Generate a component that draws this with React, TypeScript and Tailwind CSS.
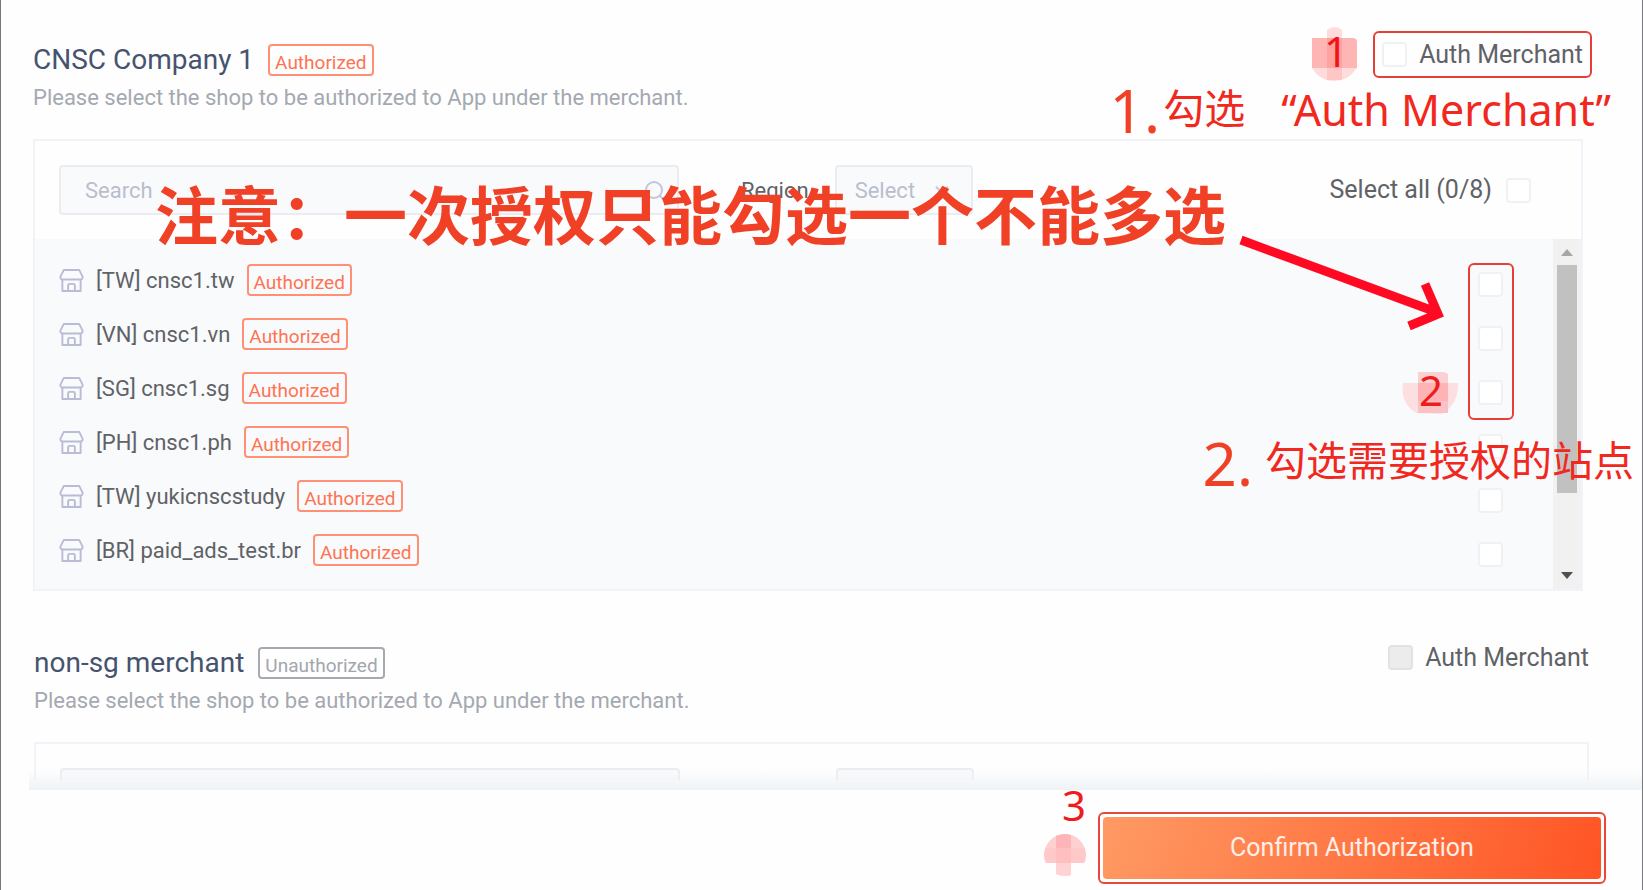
import type { ReactNode } from "react";
import { ChevronDown, Search } from "lucide-react";

const shops = [
  "[TW] cnsc1.tw",
  "[VN] cnsc1.vn",
  "[SG] cnsc1.sg",
  "[PH] cnsc1.ph",
  "[TW] yukicnscstudy",
  "[BR] paid_ads_test.br",
];

const note = "pointer-events-none absolute whitespace-nowrap leading-none font-['Noto_Sans','Noto_Sans_CJK_SC',sans-serif]";
const box = "size-[25px] shrink-0 appearance-none rounded-sm border-2 border-[#f0f1f4] bg-white checked:bg-[#ff5722] disabled:border-[#e2e2e2] disabled:bg-[#ececec]";
const field = "h-[50px] appearance-none rounded-sm border-2 border-[#eaecf0] bg-[#f9fafc] text-[#b9bece] outline-none";

function Badge({ off = false }: { off?: boolean }) {
  const color = off ? "border-[#a6a9b0] text-[#a3a6ad]" : "border-[#ff8f75] text-[#ff7352]";
  return (
    <span className={`flex h-8 items-center rounded-sm border-2 px-[5px] pt-1 text-[19px] leading-none ${color}`}>
      {off ? "Unauthorized" : "Authorized"}
    </span>
  );
}

function StoreIcon() {
  return (
    <svg width="25" height="25" viewBox="0 0 26 26" fill="none" stroke="#b9bcd4" strokeWidth="2" strokeLinejoin="round" aria-hidden="true">
      <path d="M5 2h16l3.500 7v1.500a2 2 0 0 1-2 1.500h-19a2 2 0 0 1-2-1.500V9z" />
      <path d="M3.500 12v12h19V12" />
      <path d="M9.500 24v-6a1.500 1.500 0 0 1 1.500-1.500h4a1.500 1.500 0 0 1 1.500 1.500v6" />
    </svg>
  );
}

function MerchantHeader({ id, name, off, children }: { id: string; name: string; off?: boolean; children?: ReactNode }) {
  return (
    <div className="flex items-start justify-between">
      <div>
        <div className="flex items-center gap-[14px]">
          <h2 className="text-[28px] leading-9 text-[#46536f]">{name}</h2>
          <Badge off={off} />
        </div>
        <p className="mt-1 text-[22px] leading-8 text-[#a4a9b1]">Please select the shop to be authorized to App under the merchant.</p>
      </div>
      <div className="relative flex items-center gap-3 text-[25px] leading-[25px] text-[#606266]">
        <input id={id} type="checkbox" disabled={off} className={box} />
        <label htmlFor={id}>Auth Merchant</label>
        {children}
      </div>
    </div>
  );
}

function Filters({ id, children }: { id: string; children?: ReactNode }) {
  return (
    <div className="flex h-[98px] shrink-0 items-center px-6 text-[22px]">
      <div className="relative w-[42%] max-w-[620px]">
        <input type="text" aria-label="Search shops" placeholder="Search" className={`${field} w-full px-6 placeholder:text-[#b9bece]`} />
        <Search size={24} className="absolute right-3 top-[14px] text-[#c3c6da]" />
      </div>
      <label htmlFor={id} className="ml-[62px] text-[#606266]">Region</label>
      <div className="relative ml-[26px]">
        <select id={id} className={`${field} w-[138px] pl-[18px]`}>
          <option>Select</option>
        </select>
        <ChevronDown size={22} className="pointer-events-none absolute right-5 top-[14px] text-[#c3c6da]" />
      </div>
      {children}
    </div>
  );
}

export default function App() {
  return (
    <div className="relative flex h-screen min-h-[600px] flex-col overflow-hidden border-x border-x-[#77787c] bg-[#fefefe] font-['Roboto',sans-serif]">
      <main className="min-h-0 flex-1 overflow-hidden">
        <section className="pl-8 pr-[59px] pt-[42px]">
          <MerchantHeader id="auth-1" name="CNSC Company 1">
            <span className="pointer-events-none absolute -inset-x-[9px] -inset-y-[11px] rounded-md border-2 border-[#e63e38]" />
          </MerchantHeader>

          <div className="mt-[25px] border-2 border-[#f1f3f8]">
            <Filters id="region-1">
              <div className="ml-auto mr-[26px] flex items-center gap-[14px] text-[25px] text-[#606266]">
                <label htmlFor="all">Select all (0/8)</label>
                <input id="all" type="checkbox" className={box} />
              </div>
            </Filters>
            <div className="flex bg-[#f9fafc]">
              <ul className="flex-1 pb-3 pl-6 pr-[50px] pt-[14px]">
                {shops.map((shop, i) => (
                  <li key={shop} className="flex h-[54px] items-center">
                    <StoreIcon />
                    <label htmlFor={`shop-${i}`} className="ml-3 mr-3 text-[22px] text-[#606266]">{shop}</label>
                    <Badge />
                    <input id={`shop-${i}`} type="checkbox" className={`${box} ml-auto mt-2`} />
                  </li>
                ))}
              </ul>
              <div className="flex w-7 flex-col items-center bg-[#f1f1f1]" aria-hidden="true">
                <svg width="12" height="26" viewBox="0 0 12 26"><path d="M0 17l6-7 6 7z" fill="#a6a6a6" /></svg>
                <div className="h-[228px] w-5 bg-[#c1c1c1]" />
                <svg className="mt-auto" width="12" height="26" viewBox="0 0 12 26"><path d="M0 9h12l-6 7z" fill="#505050" /></svg>
              </div>
            </div>
          </div>
        </section>

        <section className="pl-[33px] pr-[53px] pt-[54px]">
          <MerchantHeader id="auth-2" name="non-sg merchant" off />
          <div className="mt-[25px] border-2 border-[#f1f3f8]">
            <Filters id="region-2" />
          </div>
        </section>
      </main>

      <footer className="relative ml-7 mt-[10px] flex h-[100px] shrink-0 justify-end bg-[#fefefe] pr-9 pt-[22px]">
        <div className="absolute inset-x-0 -top-5 h-5 bg-linear-to-b from-[#f4f7fa]/0 to-[#eef2f6]" />
        <div className="h-[72px] w-[508px] rounded-md border-2 border-[#e8483c] p-[3px]">
          <button type="button" className="size-full rounded-sm bg-linear-110/srgb from-[#ff9a64] to-[#ff5424] text-[25px] text-[#ffefe6]">
            Confirm Authorization
          </button>
        </div>
        <svg className="absolute right-[556px] top-[44px]" width="42" height="42" viewBox="0 0 42 42" aria-hidden="true">
          <clipPath id="dot-3"><circle cx="21" cy="21" r="21" /></clipPath>
          <g clipPath="url(#dot-3)">
            <path fill="#ffd0d0" d="M0 0h42v14H0z" />
            <path fill="#ffc8c9" d="M0 14h42v15H0z" />
            <path fill="#ffb4b7" d="M12 0h15v14H12z" />
            <path fill="#ffbfc1" d="M12 14h15v15H12z" />
            <path fill="#ffd3d3" d="M12 29h15v13H12z" />
          </g>
        </svg>
        <span className={`${note} right-[556px] top-[-6px] text-[42px] text-[#ee1c1c]`}>3</span>
      </footer>

      {/* step markers */}
      <svg className="absolute right-[284px] top-[27px]" width="46" height="54" viewBox="0 0 46 54" aria-hidden="true">
        <path fill="#ffdcdc" d="M15 3q8-6 15 0v9H15zM0 41h45Q36 54 22 54T0 41z" />
        <path fill="#ffb5b3" d="M0 11h41q4 0 4 4v26H0z" />
        <path fill="#ffa3a0" d="M15 11h15v30H15z" />
        <path fill="#ffc6c6" d="M15 41h15v12H15z" />
      </svg>
      <span className={`${note} right-[294px] top-[30px] text-[42px] text-[#f01414]`}>1</span>

      <svg className="absolute right-[183px] top-[371px]" width="57" height="46" viewBox="0 0 57 46" aria-hidden="true">
        <path fill="#fcdfe0" d="M1 12h55q1 20-16 31L14 42Q-2 32 1 12z" />
        <path fill="#fbd0d2" d="M16 1h22q6 0 8 2v38H16z" />
        <path fill="#ffb3b5" d="M16 12h30v18H16z" />
        <path fill="#f9c2c5" d="M16 30h30v12H16z" />
      </svg>
      <span className={`${note} right-[199px] top-[369px] text-[42px] text-[#ee1c1c]`}>2</span>
      <div className="pointer-events-none absolute right-[128px] top-[263px] h-[157px] w-[46px] rounded-md border-2 border-[#e63e38]" />

      {/* written notes */}
      <p className={`${note} right-[482px] top-[80px] text-[60px] text-[#f04127]`}>1.</p>
      <p className={`${note} right-[31px] top-[88px] flex gap-9 text-[#f0281e]`}>
        <span className="text-[41px]">勾选</span>
        <span className="text-[43px]">“Auth Merchant”</span>
      </p>
      <p className={`${note} right-[389px] top-[433px] text-[60px] text-[#f04127]`}>2.</p>
      <p className={`${note} right-[8px] top-[440px] text-[41px] text-[#f0281e]`}>勾选需要授权的站点</p>
      <p className={`${note} left-[154px] top-[183px] text-[63px] font-bold text-[#f04127]`}>注意：一次授权只能勾选一个不能多选</p>

      <svg className="pointer-events-none absolute right-[194px] top-[233px]" width="210" height="102" viewBox="0 0 210 102" fill="none" stroke="#ff0a22" strokeWidth="9" aria-hidden="true">
        <path d="M3 7l198 73M187 51l13 30-29 12" />
      </svg>
    </div>
  );
}
